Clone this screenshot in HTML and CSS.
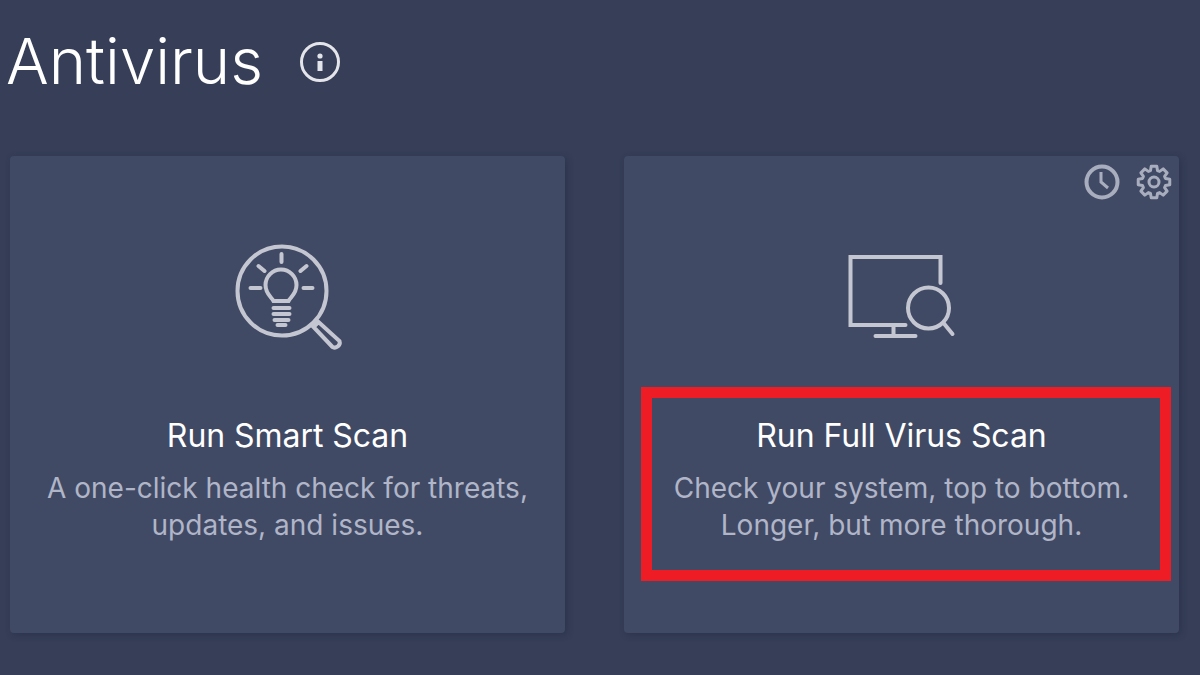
FILE: index.html
```html
<!DOCTYPE html>
<html lang="en">
<head>
    <meta charset="UTF-8">
    <title>Antivirus</title>
    <link rel="stylesheet" href="styles.css">
</head>
<body>
    <div class="header">
        <h1>Antivirus</h1>
        <svg class="info-icon" viewBox="0 0 42 42">
            <circle cx="21" cy="21" r="18.5"/>
            <circle class="fill" cx="21" cy="15" r="2.6"/>
            <path d="M21 20v10" stroke-width="5"/>
        </svg>
    </div>

    <div class="cards">
        <div class="card">
            <svg class="scan-icon" viewBox="222.5 240 130 115">
                <circle cx="281.5" cy="291" r="44.5"/>
                <path d="M281 254v8M250 288h10M303 288h9M258 266l6 5M306 266l-6 5"/>
                <path d="M273 301c-2-4-8-7-8-16a15.5 15.5 0 0 1 31 0c0 9-6 12-8 16z"/>
                <path d="M273 308h16M273 314h16M274 320h14M277 325h8"/>
                <path d="M313 327l5-5 21 19a5 5 0 0 1-7 6z"/>
            </svg>
            <h2>Run Smart Scan</h2>
            <p>A one-click health check for threats,<br>updates, and issues.</p>
        </div>

        <div class="card">
            <div class="card-actions">
                <svg viewBox="0 0 40 40">
                    <circle cx="20" cy="20" r="15.5"/>
                    <path class="hands" d="M19 10v10l7 6"/>
                </svg>
                <svg class="gear" viewBox="0 0 40 40">
                    <g transform="translate(20 20)">
                        <polygon points="11.48,-3.51 15.76,-2.78 15.76,2.78 11.48,3.51 10.6,5.64 13.11,9.18 9.18,13.11 5.64,10.6 3.51,11.48 2.78,15.76 -2.78,15.76 -3.51,11.48 -5.64,10.6 -9.18,13.11 -13.11,9.18 -10.6,5.64 -11.48,3.51 -15.76,2.78 -15.76,-2.78 -11.48,-3.51 -10.6,-5.64 -13.11,-9.18 -9.18,-13.11 -5.64,-10.6 -3.51,-11.48 -2.78,-15.76 2.78,-15.76 3.51,-11.48 5.64,-10.6 9.18,-13.11 13.11,-9.18 10.6,-5.64"/>
                        <circle r="5"/>
                    </g>
                </svg>
            </div>
            <svg class="scan-icon" viewBox="836.5 240 130 115">
                <path d="M905 325H850V257h90v26"/>
                <path d="M893 325v11M875 336h40"/>
                <circle cx="928" cy="308" r="20.5"/>
                <path d="M943 323l9 11"/>
            </svg>
            <h2>Run Full Virus Scan</h2>
            <p>Check your system, top to bottom.<br>Longer, but more thorough.</p>
            <div class="highlight"></div>
        </div>
    </div>
</body>
</html>
```

FILE: styles.css
```css
body {
    font-family: Inter, "Open Sans", sans-serif;
    margin: 0;
    height: 675px;
    overflow: hidden;
    background-color: #363e58;
}
svg {
    fill: none;
    stroke: #c4c7d1;
    stroke-width: 4;
    stroke-linecap: round;
}
.header {
    display: flex;
    align-items: center;
    gap: 36px;
    height: 124px;
    padding-left: 6px;
}
h1 {
    margin: -4px 0 0;
    font-size: 63.5px;
    font-weight: 300;
    color: #fff;
}
.info-icon {
    width: 42px;
    height: 42px;
    stroke: #e4e5ea;
    stroke-width: 3;
    stroke-linecap: butt;
}
.info-icon .fill {
    fill: #e4e5ea;
    stroke: none;
}
.cards {
    display: flex;
    gap: 59px;
    padding: 32px 0 0 10px;
}
.card {
    position: relative;
    box-sizing: border-box;
    width: 555px;
    height: 477px;
    padding-top: 84px;
    border-radius: 4px;
    background: #414a65;
    box-shadow: 2px 2px 6px rgba(30, 36, 58, 0.35);
    text-align: center;
}
.scan-icon {
    display: block;
    width: 130px;
    height: 115px;
    margin: 0 auto;
}
.card h2 {
    margin: 61px 0 0;
    font-size: 32px;
    line-height: 40px;
    font-weight: 400;
    letter-spacing: -0.05px;
    color: #fff;
}
.card p {
    margin: 14px 0 0;
    font-size: 28px;
    line-height: 37px;
    color: #b0b5c8;
}
.card-actions {
    position: absolute;
    top: 6px;
    right: 5px;
    display: flex;
    gap: 12px;
}
.card-actions svg {
    width: 40px;
    height: 40px;
    stroke: #a9aebe;
    stroke-linecap: butt;
}
.card-actions .hands {
    stroke-width: 3;
}
.card-actions .gear {
    stroke-width: 3;
    stroke-linejoin: round;
}
.highlight {
    position: absolute;
    left: 17px;
    top: 231px;
    width: 508px;
    height: 172px;
    border: 11px solid #ee1c25;
}
```
